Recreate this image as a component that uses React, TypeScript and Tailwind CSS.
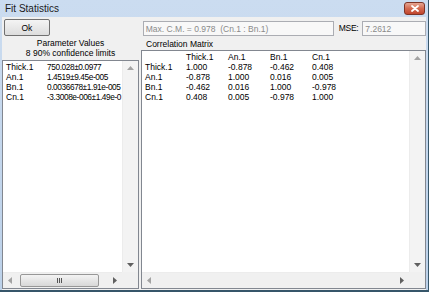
import React from 'react';

const rows = [
  ['Thick.1', '750.028±0.0977'],
  ['An.1', '1.4519±9.45e-005'],
  ['Bn.1', '0.0036678±1.91e-005'],
  ['Cn.1', '-3.3008e-006±1.49e-0'],
];

const matrix = [
  ['Thick.1', '1.000', '-0.878', '-0.462', '0.408'],
  ['An.1', '-0.878', '1.000', '0.016', '0.005'],
  ['Bn.1', '-0.462', '0.016', '1.000', '-0.978'],
  ['Cn.1', '0.408', '0.005', '-0.978', '1.000'],
];

function Arrow({ dir }: { dir: 'up' | 'down' | 'left' | 'right' }) {
  const pts = {
    up: '0,4 3.5,0 7,4',
    down: '0,0 3.5,4 7,0',
    left: '4,0 0,3.5 4,7',
    right: '0,0 4,3.5 0,7',
  }[dir];
  const vertical = dir === 'up' || dir === 'down';
  return (
    <svg width={vertical ? 7 : 4} height={vertical ? 4 : 7} viewBox={vertical ? '0 0 7 4' : '0 0 4 7'}>
      <polygon points={pts} fill={dir === 'up' || dir === 'left' ? '#a3a3a3' : '#606060'} />
    </svg>
  );
}

function VScroll() {
  return (
    <div className="w-[16px] flex flex-col justify-between items-center bg-[#f3f3f3] border-l border-[#ececec] py-[5px]">
      <Arrow dir="up" />
      <Arrow dir="down" />
    </div>
  );
}

function HScroll({ thumb }: { thumb?: boolean }) {
  return (
    <div className="h-[16px] flex items-center bg-[#f0f0f0] border-t border-[#ececec] px-[5px] gap-[8px]">
      <Arrow dir="left" />
      {thumb ? (
        <div className="flex-1 mr-[6px] h-[13px] rounded-[2px] border border-[#979797] bg-gradient-to-b from-[#f3f3f3] to-[#d8d8d8] flex items-center justify-center gap-[1px]">
          <div className="w-px h-[5px] bg-[#555]" />
          <div className="w-px h-[5px] bg-[#555]" />
          <div className="w-px h-[5px] bg-[#555]" />
        </div>
      ) : (
        <div className="flex-1" />
      )}
      <Arrow dir="right" />
    </div>
  );
}

export default function App() {
  return (
    <div className="w-[429px] h-[292px] bg-gradient-to-b from-[#cbdcf0] to-[#bcd1e9] border-r border-b-2 border-[#36566a] flex flex-col font-['Liberation_Sans',Arial,sans-serif] text-[8.5px] leading-[10px] text-black overflow-hidden">
      <div className="h-[17px] shrink-0 flex items-center pl-[5px] pr-[3px]">
        <span className="text-[10px] leading-[12px] text-[#1a1a1a]">Fit Statistics</span>
        <div className="ml-auto w-[21px] h-[13px] rounded-[3px] border border-[#7e3426] bg-gradient-to-b from-[#e5a592] via-[#d36a50] to-[#c0442c] flex items-center justify-center">
          <svg width="8" height="7" viewBox="0 0 8 7">
            <path d="M1 1 L7 6 M7 1 L1 6" stroke="#fff" strokeWidth="1.8" strokeLinecap="round" />
          </svg>
        </div>
      </div>

      <div className="flex-1 ml-[2px] mr-[2px] bg-[#f0f0f0] flex flex-col min-h-0">
        <div className="h-[20px] shrink-0 flex items-start">
          <button className="ml-[2px] mt-[2px] w-[46px] h-[17px] rounded-[2px] border border-[#707070] bg-gradient-to-b from-[#f4f4f4] to-[#dddddd] text-[8.5px] leading-[10px]">
            Ok
          </button>
          <div className="ml-[93px] mt-[4px] w-[192px] h-[15px] border border-[#abadb3] bg-[#f8f8f8] pl-[2px] flex items-center text-[#8a8a8a] whitespace-pre">
            Max. C.M. = 0.978  (Cn.1 : Bn.1)
          </div>
          <span className="ml-[5px] mt-[6px] tracking-[-0.3px]">MSE:</span>
          <div className="ml-[4px] mt-[4px] w-[64px] h-[15px] border border-[#abadb3] bg-[#f8f8f8] pl-[2px] flex items-center text-[#8a8a8a]">
            7.2612
          </div>
        </div>

        <div className="flex-1 flex min-h-0 pb-[1px]">
          <div className="w-[137px] flex flex-col">
            <div className="pt-[2px] text-center leading-[9.5px]">
              <div>Parameter Values</div>
              <div>8 90% confidence limits</div>
            </div>
            <div className="mt-[2px] flex-1 border border-[#828790] bg-white flex flex-col min-h-0">
              <div className="flex-1 flex min-h-0">
                <div className="flex-1 pt-[1px] pl-[3px] overflow-hidden whitespace-nowrap">
                  {rows.map(([k, v]) => (
                    <div key={k} className="flex h-[10px]">
                      <span className="w-[41px] shrink-0">{k}</span>
                      <span className="text-[8.3px] tracking-[-0.4px]">{v}</span>
                    </div>
                  ))}
                </div>
                <VScroll />
              </div>
              <div className="flex">
                <div className="flex-1">
                  <HScroll thumb />
                </div>
                <div className="w-[16px] h-[16px] bg-[#f0f0f0]" />
              </div>
            </div>
          </div>

          <div className="ml-[2px] flex-1 flex flex-col">
            <div className="pt-[2px] pl-[5px] h-[12px]">Correlation Matrix</div>
            <div className="mt-px flex-1 border border-[#828790] bg-white flex flex-col min-h-0">
              <div className="flex-1 flex min-h-0">
                <div className="flex-1 pt-[1px] pl-[3px] whitespace-nowrap">
                  <div className="grid grid-cols-[41px_42px_42px_42px_42px] h-[10px]">
                    <span />
                    <span>Thick.1</span>
                    <span>An.1</span>
                    <span>Bn.1</span>
                    <span>Cn.1</span>
                  </div>
                  {matrix.map((r) => (
                    <div key={r[0]} className="grid grid-cols-[41px_42px_42px_42px_42px] h-[10px]">
                      {r.map((c, i) => (
                        <span key={i}>{c}</span>
                      ))}
                    </div>
                  ))}
                </div>
                <VScroll />
              </div>
              <div className="flex">
                <div className="flex-1">
                  <HScroll />
                </div>
                <div className="w-[16px] h-[16px] bg-[#f0f0f0]" />
              </div>
            </div>
          </div>
        </div>
      </div>
    </div>
  );
}
